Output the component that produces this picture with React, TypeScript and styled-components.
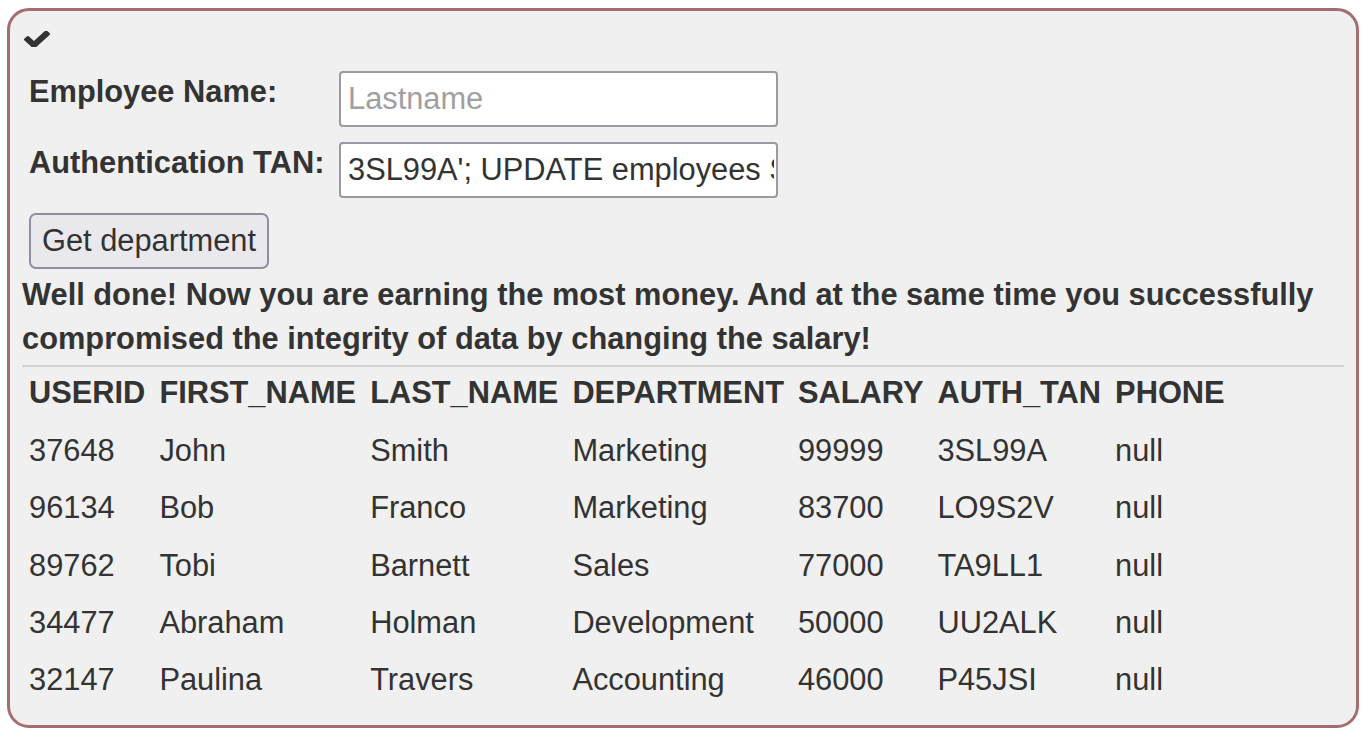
import React from "react";
import styled, { createGlobalStyle } from "styled-components";

const GlobalStyle = createGlobalStyle`
  html, body {
    margin: 0;
    padding: 0;
    background: #ffffff;
  }
  body {
    font-family: "Liberation Sans", Arial, sans-serif;
    font-size: 30.8px;
    color: #333333;
  }
`;

const AttackBox = styled.div`
  box-sizing: border-box;
  margin: 8px 0 0 7px;
  width: 1352px;
  height: 720px;
  border: 3px solid #a56e6e;
  border-radius: 22px;
  background: #f0f0f0;
  padding: 12px 12px 16px 12px;
  display: flex;
  flex-direction: column;
`;

const CheckIcon = styled.svg`
  display: block;
  width: 26px;
  height: 19px;
  margin: 8px 0 0 2px;
  fill: #333333;
`;

const Form = styled.form`
  display: flex;
  flex-direction: column;
  gap: 15px;
  margin-top: 24px;
  padding-left: 7px;
`;

const FormRow = styled.div`
  display: flex;
  align-items: center;
  height: 56px;
`;

const Label = styled.label`
  width: 310px;
  font-weight: bold;
  line-height: 35px;
  padding-bottom: 16px;
`;

const TextInput = styled.input`
  box-sizing: border-box;
  width: 439px;
  height: 56px;
  border: 2px solid #9a9aa2;
  border-radius: 4px;
  background: #ffffff;
  padding: 0 2px 0 7px;
  font-family: "Liberation Sans", Arial, sans-serif;
  font-size: 30.8px;
  color: #333333;
  outline: none;
  &::placeholder {
    color: #a0a0a0;
  }
`;

const SubmitButton = styled.button`
  align-self: flex-start;
  box-sizing: border-box;
  width: 240px;
  height: 56px;
  border: 2px solid #8f8f9d;
  border-radius: 7px;
  background: #e9e9ed;
  font-family: "Liberation Sans", Arial, sans-serif;
  font-size: 30.8px;
  color: #333333;
  padding: 0;
  white-space: nowrap;
  text-align: center;
`;

const Message = styled.p`
  margin: 4px 0 0 0;
  font-weight: bold;
  line-height: 44px;
`;

const Rule = styled.hr`
  margin: 4px 0 0 0;
  border: none;
  border-top: 2px solid #d2d2d2;
  height: 0;
`;

const Table = styled.table`
  align-self: flex-start;
  border-collapse: collapse;
  margin-top: 3px;
`;

const HeadCell = styled.th`
  text-align: left;
  font-weight: bold;
  line-height: 44px;
  padding: 1px 7px 7px 7px;
  white-space: nowrap;
`;

const Cell = styled.td`
  line-height: 44px;
  padding: 6.7px 7px;
  white-space: nowrap;
`;

const columns = ["USERID", "FIRST_NAME", "LAST_NAME", "DEPARTMENT", "SALARY", "AUTH_TAN", "PHONE"];

const rows = [
  ["37648", "John", "Smith", "Marketing", "99999", "3SL99A", "null"],
  ["96134", "Bob", "Franco", "Marketing", "83700", "LO9S2V", "null"],
  ["89762", "Tobi", "Barnett", "Sales", "77000", "TA9LL1", "null"],
  ["34477", "Abraham", "Holman", "Development", "50000", "UU2ALK", "null"],
  ["32147", "Paulina", "Travers", "Accounting", "46000", "P45JSI", "null"],
];

export default function App() {
  return (
    <>
      <GlobalStyle />
      <AttackBox>
        <CheckIcon viewBox="121 370 1550 1056" preserveAspectRatio="none">
          <path d="M1671 566q0 40-28 68l-724 724-136 136q-28 28-68 28t-68-28l-136-136-362-362q-28-28-28-68t28-68l136-136q28-28 68-28t68 28l294 295 656-657q28-28 68-28t68 28l136 136q28 28 28 68z" />
        </CheckIcon>
        <Form onSubmit={(e) => e.preventDefault()}>
          <FormRow>
            <Label>Employee Name:</Label>
            <TextInput type="text" placeholder="Lastname" />
          </FormRow>
          <FormRow>
            <Label>Authentication TAN:</Label>
            <TextInput
              type="text"
              defaultValue="3SL99A'; UPDATE employees SET SALARY=99999 WHERE LAST_NAME='Smith"
            />
          </FormRow>
          <SubmitButton type="submit">Get department</SubmitButton>
        </Form>
        <Message>
          Well done! Now you are earning the most money. And at the same time you successfully
          compromised the integrity of data by changing the salary!
        </Message>
        <Rule />
        <Table>
          <thead>
            <tr>
              {columns.map((c) => (
                <HeadCell key={c}>{c}</HeadCell>
              ))}
            </tr>
          </thead>
          <tbody>
            {rows.map((r) => (
              <tr key={r[0]}>
                {r.map((v, i) => (
                  <Cell key={i}>{v}</Cell>
                ))}
              </tr>
            ))}
          </tbody>
        </Table>
      </AttackBox>
    </>
  );
}
